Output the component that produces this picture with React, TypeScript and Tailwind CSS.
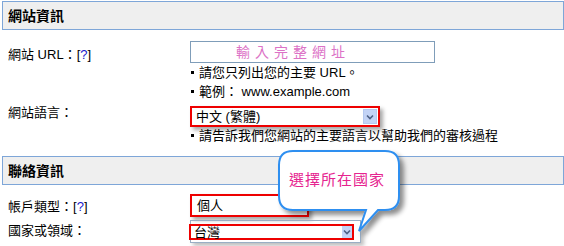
import React from "react";

const font = {
  fontFamily: '"Liberation Sans", "Noto Sans CJK TC", Arial, sans-serif',
};

function Header({ title }: { title: string }) {
  return (
    <div className="h-[29px] border border-[#7ea6d8] bg-[#efefef] flex items-center pl-[5px]">
      <span className="text-[14px] font-bold text-black leading-none">{title}</span>
    </div>
  );
}

function Q() {
  return (
    <span>
      [<span className="text-[#1a1acc]">?</span>]
    </span>
  );
}

function Bullet({ children, lh }: { children: React.ReactNode; lh: string }) {
  return (
    <div className={`flex items-center ${lh}`}>
      <span className="w-[3px] h-[3px] bg-black mr-[5px] ml-[1px]" />
      <span>{children}</span>
    </div>
  );
}

function ArrowBtn() {
  return (
    <div className="w-[14px] h-[15px] bg-[#c3d3f6] border border-[#b4c8f0] flex items-center justify-center">
      <svg width="8" height="6" viewBox="0 0 8 6">
        <path d="M1 1.5 L4 4.5 L7 1.5" stroke="#4d6185" strokeWidth="1.6" fill="none" />
      </svg>
    </div>
  );
}

export default function App() {
  return (
    <div
      className="relative w-[564px] h-[246px] overflow-hidden bg-white pt-px pl-[2px] text-[13px] text-black"
      style={font}
    >
      <Header title="網站資訊" />

      {/* URL row */}
      <div className="flex mt-[11px]">
        <div className="w-[188px] pl-[6px] pt-[6px] leading-[16px]">
          網站 URL：<Q />
        </div>
        <div>
          <div className="w-[245px] h-[22px] border border-[#7f9db9] flex items-center pl-[45px]">
            <span className="text-[14px] tracking-[5px] text-[#dc72c6] leading-none">輸入完整網址</span>
          </div>
          <Bullet lh="h-[19px]">請您只列出您的主要 URL。</Bullet>
          <Bullet lh="h-[19px]">範例： www.example.com</Bullet>
        </div>
      </div>

      {/* language row */}
      <div className="flex mt-[5px]">
        <div className="w-[188px] pl-[6px] leading-[14px]">網站語言：</div>
        <div>
          <div className="w-[190px] h-[21px] border-2 border-[#ee0000] flex items-center justify-between pl-[4px] pr-[1px] shadow-[3px_3px_4px_rgba(0,0,0,0.35)]">
            <span className="leading-none">中文 (繁體)</span>
            <ArrowBtn />
          </div>
          <Bullet lh="h-[17px]">請告訴我們您網站的主要語言以幫助我們的審核過程</Bullet>
        </div>
      </div>

      <div className="mt-[12px]">
        <Header title="聯絡資訊" />
      </div>

      {/* account type */}
      <div className="flex mt-[9px]">
        <div className="w-[188px] pl-[6px] pt-[5px] leading-[16px]">
          帳戶類型：<Q />
        </div>
        <div className="w-[119px] h-[23px] border-2 border-[#ee0000] flex items-center pl-[5px] shadow-[3px_3px_4px_rgba(0,0,0,0.35)]">
          <span className="leading-none">個人</span>
        </div>
      </div>

      {/* country */}
      <div className="flex mt-[3px]">
        <div className="w-[188px] pl-[6px] pt-[3px] leading-[16px]">國家或領域：</div>
        <div className="relative w-[171px] h-[23px] border border-[#9aaec4] shadow-[3px_3px_4px_rgba(0,0,0,0.25)]">
          <div className="absolute left-[-2px] top-[3px] w-[165px] h-[16px] border-2 border-[#ee0000] flex items-center justify-between pl-[3px]">
            <span className="leading-none">台灣</span>
            <div className="w-[10px] h-[12px] bg-[#c3d3f6] flex items-center justify-center">
              <svg width="8" height="6" viewBox="0 0 8 6">
                <path d="M1 1.5 L4 4.5 L7 1.5" stroke="#4d6185" strokeWidth="1.6" fill="none" />
              </svg>
            </div>
          </div>
        </div>
      </div>

      {/* callout */}
      <div className="absolute left-[272px] top-[145px] w-[140px] h-[100px]">
        <svg width="140" height="100" viewBox="0 0 140 100" className="absolute left-0 top-0">
          <defs>
            <filter id="sh" x="-20%" y="-20%" width="150%" height="150%">
              <feGaussianBlur in="SourceAlpha" stdDeviation="2.5" />
              <feOffset dx="4" dy="4" result="b" />
              <feComponentTransfer>
                <feFuncA type="linear" slope="0.45" />
              </feComponentTransfer>
              <feMerge>
                <feMergeNode />
                <feMergeNode in="SourceGraphic" />
              </feMerge>
            </filter>
          </defs>
          <path
            d="M21 6 H113 Q127 6 127 20 V51 Q127 65 113 65 H106 L87 86 L94 65 H21 Q7 65 7 51 V20 Q7 6 21 6 Z"
            fill="#ffffff"
            stroke="#2f8ff0"
            strokeWidth="2"
            filter="url(#sh)"
          />
        </svg>
        <div className="absolute left-[17px] top-[27px] text-[15px] tracking-[1px] text-[#e6248f] leading-none">
          選擇所在國家
        </div>
      </div>
    </div>
  );
}
